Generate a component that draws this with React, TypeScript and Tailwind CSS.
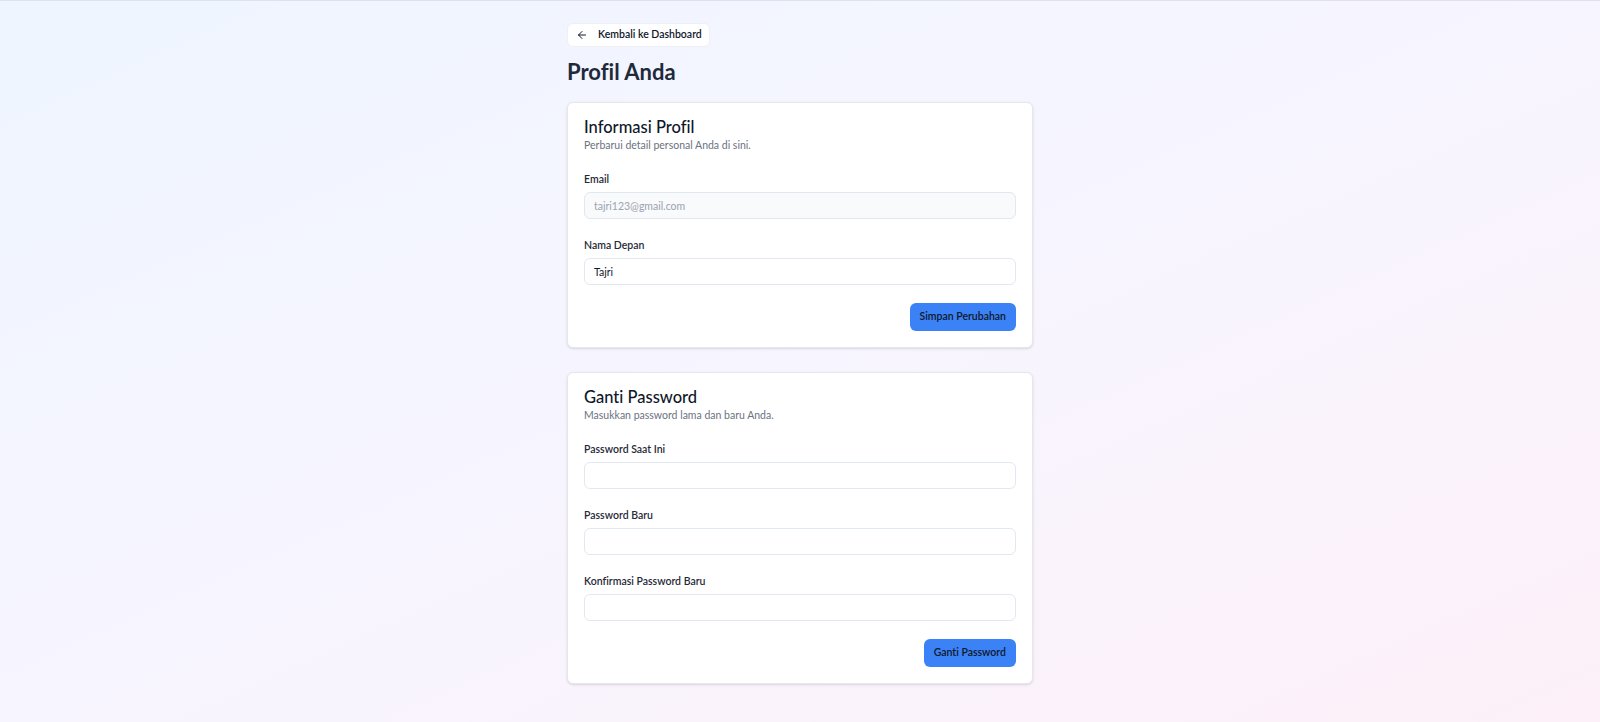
import React from "react";

const font = { fontFamily: 'Lato, "Noto Sans", sans-serif' };

function Field({ label, value, disabled }: { label: string; value?: string; disabled?: boolean }) {
  return (
    <div className="mt-[18px] flex flex-col">
      <label className="text-[10.5px] leading-[16px] font-semibold text-[#1f2937]">{label}</label>
      <input
        readOnly
        value={value ?? ""}
        disabled={disabled}
        type={value ? "text" : "password"}
        className={
          "mt-[5px] h-[27px] w-full rounded-md border border-[#e2e8f0] px-[9px] text-[10.5px] outline-none [font-variant-ligatures:none] " +
          (disabled ? "bg-[#f8fafc] text-[#9ca3af]" : "bg-white text-[#0f172a]")
        }
      />
    </div>
  );
}

function Card({ title, subtitle, children, button }: { title: string; subtitle: string; children: React.ReactNode; button: string }) {
  return (
    <div className="rounded-md border border-[#e5e7eb] bg-white px-4 pt-[14px] pb-4 shadow-sm">
      <h2 className="text-[16.5px] leading-[20px] font-medium text-[#0f172a]">{title}</h2>
      <p className="text-[10.5px] leading-[16px] text-[#6b7280]">{subtitle}</p>
      {children}
      <div className="mt-[18px] flex justify-end">
        <button className="h-[28px] rounded-md bg-[#3b82f6] px-[10px] text-[10.5px] font-semibold text-[#0f172a]">
          {button}
        </button>
      </div>
    </div>
  );
}

export default function App() {
  return (
    <div
      style={font}
      className="min-h-screen w-full border-t border-[#dfe3e8] bg-gradient-to-br from-[#eef5ff] via-[#f7f5ff] to-[#fdf0f8] [font-variant-ligatures:none]"
    >
      <div className="mx-auto flex w-[466px] flex-col pt-[22px] pb-[38px]">
        <div>
          <button className="flex h-[24px] items-center rounded-md border border-[#eef0f3] bg-white pl-[8px] pr-[7px] text-[10.5px] font-semibold text-[#0f172a]">
            <svg width="12" height="12" viewBox="0 0 24 24" fill="none" stroke="currentColor" strokeWidth="2" strokeLinecap="round" strokeLinejoin="round">
              <path d="m12 19-7-7 7-7" />
              <path d="M19 12H5" />
            </svg>
            <span className="ml-[10px]">Kembali ke Dashboard</span>
          </button>
        </div>
        <h1 className="mt-[11px] text-[22px] leading-[28px] font-bold text-[#1e293b]">Profil Anda</h1>
        <div className="mt-4 flex flex-col gap-6">
          <Card title="Informasi Profil" subtitle="Perbarui detail personal Anda di sini." button="Simpan Perubahan">
            <Field label="Email" value="tajri123@gmail.com" disabled />
            <Field label="Nama Depan" value="Tajri" />
          </Card>
          <Card title="Ganti Password" subtitle="Masukkan password lama dan baru Anda." button="Ganti Password">
            <Field label="Password Saat Ini" />
            <Field label="Password Baru" />
            <Field label="Konfirmasi Password Baru" />
          </Card>
        </div>
      </div>
    </div>
  );
}
